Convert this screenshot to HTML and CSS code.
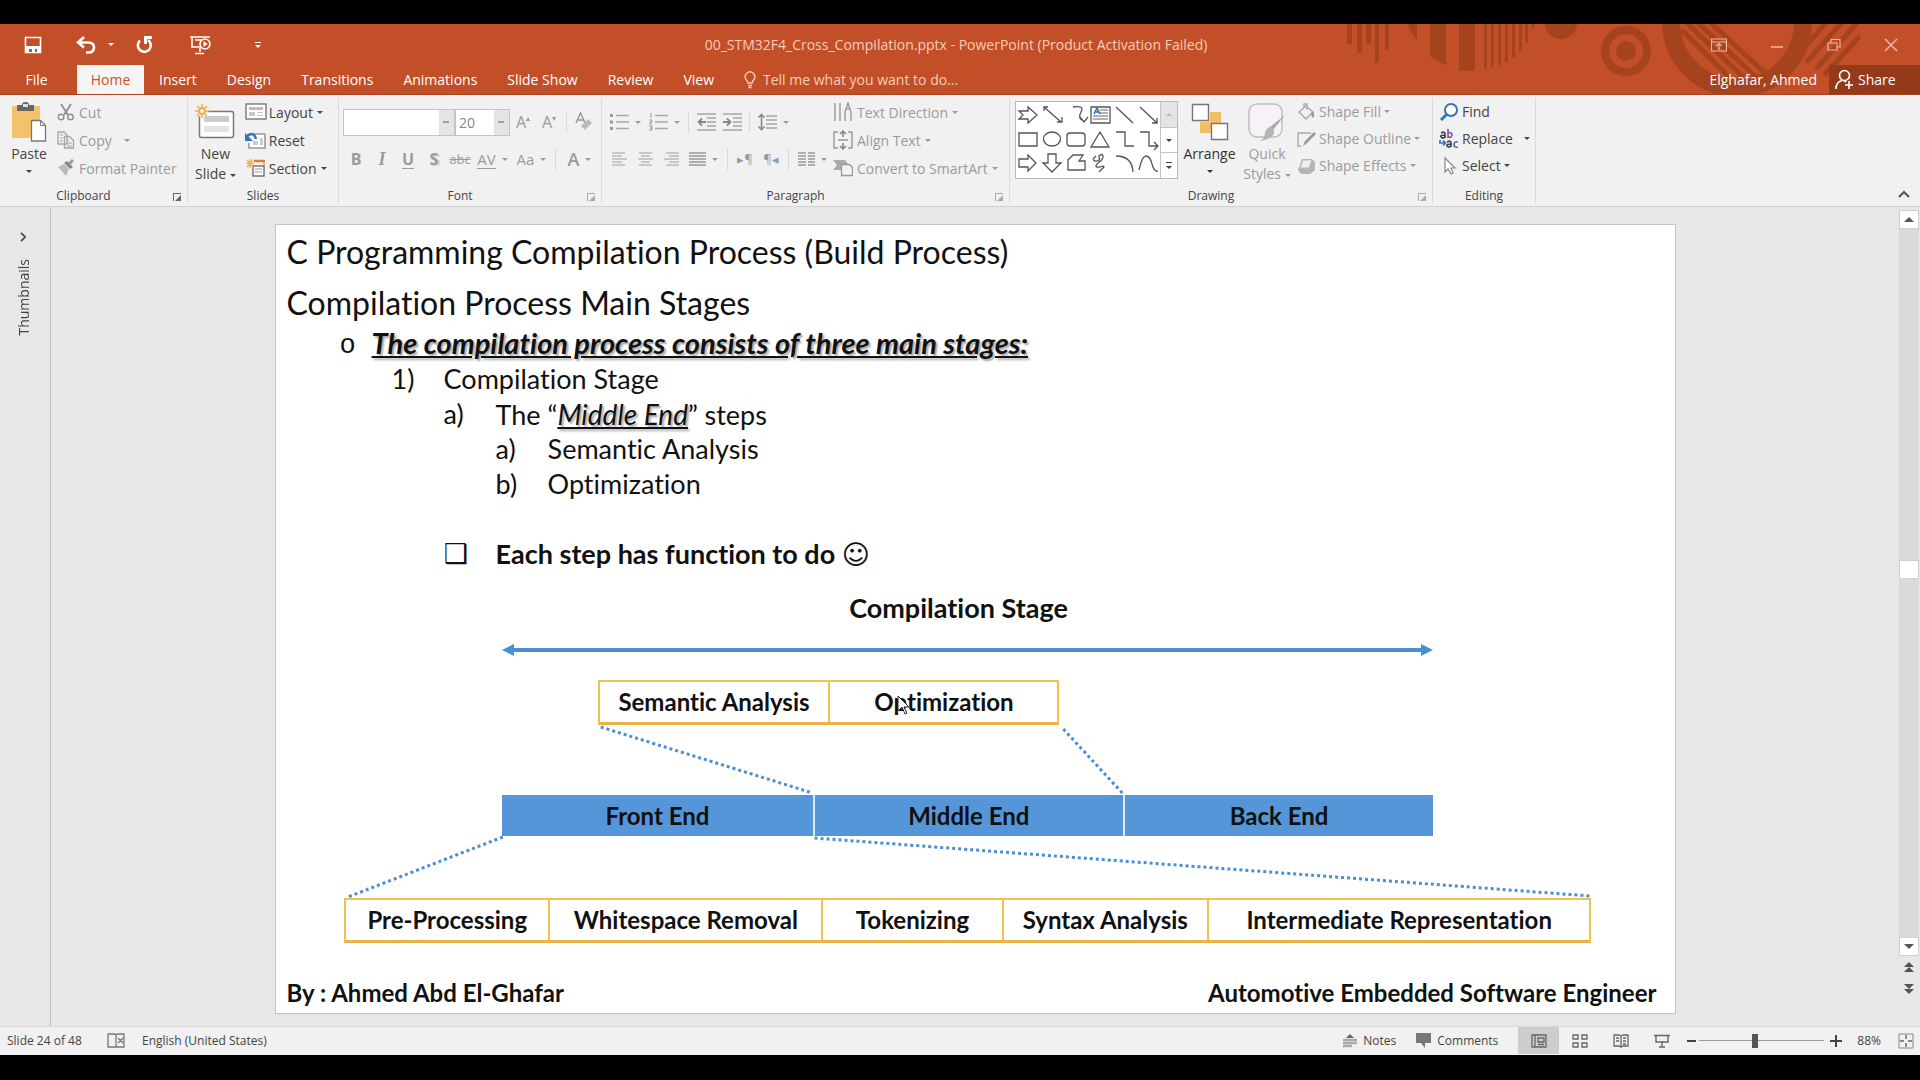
FILE: index.html
```html
<!DOCTYPE html>
<html lang="en">
<head>
<meta charset="utf-8">
<title>00_STM32F4_Cross_Compilation.pptx - PowerPoint</title>
<link rel="stylesheet" href="styles.css">
</head>
<body>
<div class="app">
  <header class="top">
    <svg class="top-art" width="520" height="71" viewBox="1340 24 520 71" aria-hidden="true">
      <g fill="#a5431f">
        <path d="M1347 24h5v20h-5zM1357 24h5v29h-5zM1366 24h5v20h-5zM1375 24h4v39h-4zM1385 24h4v26h-4z"/>
        <path d="M1408 24h9v16q-6-6-9-16zM1430 24h16v41q-9-3-16-9zM1459 24h16v47h-16zM1484 24h3v45h-3zM1491 24h3v43h-3zM1498 24h3v41h-3zM1505 24h3v38h-3zM1512 24h3v34h-3zM1519 24h3v27h-3zM1525 24h3v19h-3zM1532 24h2v5h-2z"/>
        <circle cx="1561" cy="23" r="16"/>
        <circle cx="1626" cy="51" r="10"/>
      </g>
      <circle cx="1626" cy="51" r="21" fill="none" stroke="#a5431f" stroke-width="8"/>
      <circle cx="1737" cy="22" r="66" fill="none" stroke="#a5431f" stroke-width="18"/>
      <path d="M1682 30l54 54M1686 22l60 58M1697 22l60 56M1710 22l56 52M1850 -5l-45 52M1866 -5l-60 68M1882 -5l-66 74M1898 -5l-74 80" stroke="#a5431f" stroke-width="5" fill="none"/>
    </svg>
    <div class="title-row">
      <div class="quick">
        <button class="tb save" aria-label="Save"><svg width="18" height="18" viewBox="0 0 18 18"><path d="M1.500 1.500h15v15h-15z" fill="none" stroke="#fff" stroke-width="1.600"/><path d="M1 10h16v7H1z" fill="#fff"/><path d="M5 13h3v3H5zM11 13h2v3h-2z" fill="#c24f28"/></svg></button>
        <button class="tb undo" aria-label="Undo"><svg width="20" height="18" viewBox="0 0 20 18"><path d="M8 1L2 6.500l6 5M3 6.500h9q6 0 6 5t-6 5h-2" fill="none" stroke="#fff" stroke-width="2.600"/></svg><span class="caret"></span></button>
        <button class="tb redo" aria-label="Repeat"><svg width="18" height="18" viewBox="0 0 18 18"><path d="M5 4.500A6.500 6.500 0 1 0 13 4" fill="none" stroke="#fff" stroke-width="2.600"/><path d="M9 0h8v3h-5v5H9z" fill="#fff"/></svg></button>
        <button class="tb show" aria-label="Start From Beginning"><svg width="24" height="20" viewBox="0 0 24 20"><path d="M1 2h20M3 2v10h9M6 5h7M11 13v4M6 18.500h9" fill="none" stroke="#fff" stroke-width="1.600"/><circle cx="16" cy="9" r="5" fill="#c24f28" stroke="#fff" stroke-width="1.600"/><path d="M14.500 6l4 3-4 3z" fill="#fff"/></svg></button>
        <button class="tb more" aria-label="Customize Quick Access Toolbar"><span class="bar"></span><span class="caret"></span></button>
      </div>
      <div class="doc-title">00_STM32F4_Cross_Compilation.pptx - PowerPoint (Product Activation Failed)</div>
      <div class="win">
        <button aria-label="Ribbon Display Options"><svg width="16" height="14" viewBox="0 0 16 14"><path d="M.500 1h15v12H.500zM.500 4h15M8 12V6M5 8l3-2.500L11 8" fill="none" stroke="#f2b79f" stroke-width="1.200"/></svg></button>
        <button aria-label="Minimize"><svg width="14" height="14" viewBox="0 0 14 14"><path d="M1 9h12" stroke="#f2b79f" stroke-width="1.500"/></svg></button>
        <button aria-label="Restore Down"><svg width="14" height="14" viewBox="0 0 14 14"><path d="M1 5h9v7H1zM4 5V1.500h9V9h-3" fill="none" stroke="#f2b79f" stroke-width="1.200"/></svg></button>
        <button aria-label="Close"><svg width="14" height="14" viewBox="0 0 14 14"><path d="M1 1l12 12M13 1L1 13" stroke="#f2b79f" stroke-width="1.500"/></svg></button>
      </div>
    </div>
    <div class="tab-row">
      <nav class="tabs">
        <button class="tab file">File</button><button class="tab active">Home</button><button class="tab">Insert</button><button class="tab">Design</button><button class="tab">Transitions</button><button class="tab">Animations</button><button class="tab">Slide Show</button><button class="tab">Review</button><button class="tab">View</button>
      </nav>
      <label class="tell"><svg width="12" height="18" viewBox="0 0 12 18"><path d="M4 12Q3.500 10 2 8.500A4.800 4.800 0 1 1 10 8.500Q8.500 10 8 12zM4 14.500h4M4.500 16.500h3" fill="none" stroke="#f8cdbb" stroke-width="1.400"/></svg><input type="text" placeholder="Tell me what you want to do..." aria-label="Tell me what you want to do"></label>
      <div class="account">
        <span>Elghafar, Ahmed</span>
        <button class="share"><svg width="20" height="21" viewBox="0 0 20 21"><circle cx="9.500" cy="6.500" r="5" fill="none" stroke="#fff" stroke-width="1.600"/><path d="M1 20q0-7 6-8.500M9 11.500l2 1.500M14 12v8M10 16h8" fill="none" stroke="#fff" stroke-width="1.600"/></svg>Share</button>
      </div>
    </div>
  </header>

  <section class="ribbon" aria-label="Home ribbon">
    <div class="group g-clip">
      <div class="body">
        <button class="big paste"><svg width="36" height="40" viewBox="0 0 36 40"><path d="M1 4h28v32H1z" fill="#f4c16d"/><path d="M6 3h5q0-3 3.500-3T18 3h5v6H6z" fill="#666"/><path d="M12 2h5v3h-5z" fill="#ddd"/><path d="M20.500 18.500h9l5 5V39h-14z" fill="#fff" stroke="#777" stroke-width="1.300"/><path d="M29.500 18.500v5h5" fill="none" stroke="#777"/></svg><span>Paste</span><span class="caret"></span></button>
        <div class="rows off">
          <button class="row"><svg width="18" height="18" viewBox="0 0 18 18"><path d="M4 1l7 11M14 1L7 12" stroke="#8f8f8f" stroke-width="1.800"/><circle cx="4" cy="14" r="2.800" fill="none" stroke="#8f8f8f" stroke-width="1.400"/><circle cx="13.500" cy="14" r="2.800" fill="none" stroke="#8f8f8f" stroke-width="1.400"/></svg>Cut</button>
          <button class="row"><svg width="18" height="18" viewBox="0 0 18 18"><path d="M1 1h6l3 3v9H1zM7.500 5.500h5l4 4V17h-9z" fill="#f1f1f1" stroke="#a5a5a5" stroke-width="1.300"/><path d="M3 4h3M3 7h3M3 10h3M10 9h2M10 12h5M10 15h5" stroke="#a5a5a5"/></svg>Copy <span class="caret wide"></span></button>
          <button class="row"><svg width="18" height="18" viewBox="0 0 18 18"><path d="M1 8l6-3 5 5-3 7z" fill="#bbb"/><path d="M7 4l3-2 6 6-3 2z" fill="#888"/><path d="M12 5l4-4" stroke="#999" stroke-width="3"/></svg>Format Painter</button>
        </div>
      </div>
      <div class="label">Clipboard<button class="launch dark" aria-label="Clipboard settings"></button></div>
    </div>

    <div class="group g-slides">
      <div class="body">
        <button class="big"><svg width="40" height="36" viewBox="0 0 40 36"><rect x="4.500" y="7.500" width="34" height="26" rx="2" fill="#fff" stroke="#777" stroke-width="1.500"/><path d="M9 12h25v6H9z" fill="#ccc"/><path d="M9 22h25v6H9z" fill="#e4e4e4"/><circle cx="7" cy="7" r="6" fill="#f1f1f1"/><circle cx="7" cy="7" r="3" fill="none" stroke="#eeb04e" stroke-width="2"/><path d="M7 0v3M7 11v3M0 7h3M11 7h3M2 2l2 2M10 10l2 2M12 2l-2 2M2 12l2-2" stroke="#eeb04e" stroke-width="1.500"/></svg><span>New</span><span>Slide <i class="caret"></i></span></button>
        <div class="rows">
          <button class="row"><svg width="22" height="18" viewBox="0 0 22 18"><rect x="1" y="1" width="20" height="15" fill="#fff" stroke="#777" stroke-width="1.400"/><path d="M4 4h14v3H4z" fill="#bbb"/><path d="M4 9h6v4H4zM12 9h6v1h-6zM12 12h6v1h-6z" fill="#c8c8c8"/></svg>Layout <span class="caret"></span></button>
          <button class="row"><svg width="22" height="18" viewBox="0 0 22 18"><path d="M9 3h11v14H4v-5" fill="#fff" stroke="#999" stroke-width="1.600"/><path d="M8 10h5v4H8zM15 7h3v7h-3z" fill="#ccc"/><path d="M2 5q7-5 9 3" fill="none" stroke="#3a74b8" stroke-width="2.500"/><path d="M0 2v8h8z" fill="#3a74b8"/></svg>Reset</button>
          <button class="row"><svg width="22" height="18" viewBox="0 0 22 18"><path d="M9 2h11" stroke="#d9803c" stroke-width="2.500"/><path d="M8 7h11v10H8z" fill="#fff" stroke="#777" stroke-width="1.500"/><path d="M10 10h7M10 13h7" stroke="#bbb" stroke-width="1.500"/><path d="M19 2v5" stroke="#d9803c"/><path d="M5 0v9M1 4.500h8M2 1l6 7M8 1L2 8" stroke="#f0b45c" stroke-width="1.400"/></svg>Section <span class="caret"></span></button>
        </div>
      </div>
      <div class="label">Slides</div>
    </div>

    <div class="group g-font">
      <div class="body tools off">
        <div class="line">
          <select class="combo name" aria-label="Font" disabled><option></option></select><select class="combo size" aria-label="Font size" disabled><option>20</option></select>
          <button class="ib up" aria-label="Increase font size">A<sup>▴</sup></button><button class="ib up" aria-label="Decrease font size">A<sup>▾</sup></button><span class="sep"></span>
          <button class="ib" aria-label="Clear formatting"><svg width="18" height="20" viewBox="0 0 18 20"><path d="M1 11L5.500 1 10 11M3 8h5" fill="none" stroke="#999" stroke-width="1.500"/><path d="M6 14l7-7 4 4-7 7z" fill="#bbb"/></svg></button>
        </div>
        <div class="line">
          <button class="ib b">B</button><button class="ib i">I</button><button class="ib u">U</button><button class="ib s">S</button><button class="ib x">abc</button>
          <button class="ib dd av"><span>AV</span><i class="caret"></i></button><button class="ib dd"><span>Aa</span><i class="caret"></i></button><span class="sep"></span><button class="ib dd fc"><span>A</span><i class="caret"></i></button>
        </div>
      </div>
      <div class="label">Font<button class="launch" aria-label="Font settings"></button></div>
    </div>

    <div class="group g-para">
      <div class="body">
        <div class="tools off">
          <div class="line">
            <button class="ib dd" aria-label="Bullets"><svg width="19" height="18" viewBox="0 0 19 18"><path d="M6 2.500h13M6 9h13M6 15.500h13" stroke="#aaa" stroke-width="1.300"/><path d="M0 1h3v3H0zM0 7.500h3v3H0zM0 14h3v3H0z" fill="#999"/></svg><i class="caret"></i></button>
            <button class="ib dd" aria-label="Numbering"><svg width="19" height="18" viewBox="0 0 19 18"><path d="M6 2.500h13M6 9h13M6 15.500h13" stroke="#aaa" stroke-width="1.300"/><path d="M2 0v5M0 7h3v2H1v2h2M0 13h3v4H0M1 15h2" fill="none" stroke="#999"/></svg><i class="caret"></i></button><span class="sep"></span>
            <button class="ib" aria-label="Decrease indent"><svg width="19" height="18" viewBox="0 0 19 18"><path d="M0 1h19M10 5h9M10 9h9M10 13h9M0 17h19" stroke="#a5a5a5" stroke-width="1.500"/><path d="M9 9H2M5 5.500L1.500 9 5 12.500" fill="none" stroke="#888" stroke-width="1.800"/></svg></button>
            <button class="ib" aria-label="Increase indent"><svg width="19" height="18" viewBox="0 0 19 18"><path d="M0 1h19M10 5h9M10 9h9M10 13h9M0 17h19" stroke="#a5a5a5" stroke-width="1.500"/><path d="M0 9h7M4 5.500L7.500 9 4 12.500" fill="none" stroke="#888" stroke-width="1.800"/></svg></button><span class="sep"></span>
            <button class="ib dd" aria-label="Line spacing"><svg width="19" height="18" viewBox="0 0 19 18"><path d="M8 3h11M8 7h11M8 11h11M8 15h11" stroke="#a5a5a5" stroke-width="1.500"/><path d="M3.500 1v16M.500 4.500l3-3 3 3M.500 13.500l3 3 3-3" fill="none" stroke="#888" stroke-width="1.600"/></svg><i class="caret"></i></button>
          </div>
          <div class="line">
            <button class="ib" aria-label="Align left"><svg width="15" height="14" viewBox="0 0 15 14"><path d="M0 1h13M0 4h10M0 7h15M0 10h10M0 13h13" stroke="#bbb" stroke-width="1.600"/></svg></button>
            <button class="ib" aria-label="Center"><svg width="15" height="14" viewBox="0 0 15 14"><path d="M1 1h13M3 4h9M0 7h15M3 10h9M1 13h13" stroke="#bbb" stroke-width="1.600"/></svg></button>
            <button class="ib" aria-label="Align right"><svg width="15" height="14" viewBox="0 0 15 14"><path d="M2 1h13M5 4h10M0 7h15M5 10h10M2 13h13" stroke="#bbb" stroke-width="1.600"/></svg></button>
            <button class="ib dd" aria-label="Justify"><svg width="17" height="14" viewBox="0 0 17 14"><path d="M0 1h17M0 4h17M0 7h17M0 10h17M0 13h17" stroke="#999" stroke-width="1.400"/></svg><i class="caret"></i></button><span class="sep"></span>
            <button class="ib pil" aria-label="Left to right">▸¶</button><button class="ib pil" aria-label="Right to left">¶◂</button><span class="sep"></span>
            <button class="ib dd" aria-label="Columns"><svg width="17" height="14" viewBox="0 0 17 14"><path d="M0 1h8M0 4h8M0 7h8M0 10h8M0 13h8M10 1h7M10 4h7M10 7h7M10 10h7M10 13h7" stroke="#999" stroke-width="1.400"/></svg><i class="caret"></i></button>
          </div>
        </div>
        <div class="rows off">
          <button class="row"><svg width="20" height="20" viewBox="0 0 20 20"><path d="M2 1v18M7 1v18M12 10v9M18 10v9M12 10l3-9 3 9M13 7h4" fill="none" stroke="#999" stroke-width="1.400"/></svg>Text Direction <span class="caret"></span></button>
          <button class="row"><svg width="20" height="20" viewBox="0 0 20 20"><path d="M5 2H1v16h4M15 2h4v16h-4M5 10h10" fill="none" stroke="#999" stroke-width="1.400"/><path d="M10 1v6M7 4l3-3 3 3M10 13v6M7 16l3 3 3-3" fill="none" stroke="#888" stroke-width="1.600"/></svg>Align Text <span class="caret"></span></button>
          <button class="row"><svg width="20" height="18" viewBox="0 0 20 18"><path d="M0 1h12l3 4H8v6H0l4-5z" fill="#aaa"/><path d="M8.500 5.500h8l3 3v8h-11z" fill="#f1f1f1" stroke="#999" stroke-width="1.300"/></svg>Convert to SmartArt <span class="caret"></span></button>
        </div>
      </div>
      <div class="label">Paragraph<button class="launch" aria-label="Paragraph settings"></button></div>
    </div>

    <div class="group g-draw">
      <div class="body">
        <div class="gallery">
          <svg class="shapes" width="144" height="74" viewBox="0 0 144 74" role="img" aria-label="Shapes"><g fill="none" stroke="#555" stroke-width="1.300">
            <path d="M3 9h9V5l9 8-9 8v-4H3l4-4zM28 5l17 15M41 20h5v-5M28 9V5h4M57 5q12-2 8 5t3 9M64 15l4 5 4-5M75 5h19v16H75z"/>
            <path d="M84 8h8M84 11h8M77 14h15M77 17h15" stroke="#999"/><path d="M78 12l3-6 3 6M79 10h4" stroke="#2b6cb8" stroke-width="1.500"/>
            <path d="M100 5l17 16M124 5l17 16M141 16v5h-5M3 31h18v13H3z"/><ellipse cx="36" cy="37" rx="8.500" ry="7"/><rect x="51" y="31" width="18" height="13" rx="3"/>
            <path d="M84 30l9 15H75zM100 30h9v14h9M124 30h9v14h9M138 40l4 4-4 4M3 57h9v-4l8 8-8 8v-4H3zM32 52h8v9h5l-9 9-9-9h5zM52 68V58l5-5h10l-4 6h6v9zM80 54q-5 4-1 5 6 1 4-5 3-3 4 0t-6 8q-3 4 3 3 6-2 3 1t-4 4M100 54q16 0 17 16M123 68q3-14 7-14t6 8 6 7"/></g></svg>
          <div class="gal-nav"><button class="dim" aria-label="Scroll up"><i class="caret flip"></i></button><button aria-label="Scroll down"><i class="caret"></i></button><button aria-label="More shapes"><i class="bar"></i><i class="caret"></i></button></div>
        </div>
        <button class="big arrange"><svg width="38" height="38" viewBox="0 0 38 38"><path d="M19 9h11v11H19zM9 19h11v11H9z" fill="#f2bd66"/><path d="M1.500 1.500h16v16h-16zM20.500 20.500h16v16h-16z" fill="#fff" stroke="#777" stroke-width="1.400"/></svg><span>Arrange</span><span class="caret"></span></button>
        <button class="big off"><svg width="38" height="38" viewBox="0 0 38 38"><rect x="1" y="1" width="33" height="33" rx="8" fill="#f7f2f7" stroke="#c4bcc4" stroke-width="1.500"/><path d="M37 12L25 27l-3-3z" fill="#aaa"/><path d="M22 24q5 2 4 7-4 6-14 7 5-3 5-8 1-5 5-6z" fill="#b5b5b5"/></svg><span>Quick</span><span>Styles <i class="caret"></i></span></button>
        <div class="rows off">
          <button class="row"><svg width="19" height="18" viewBox="0 0 19 18"><path d="M2 9l7-6 7 6-7 7zM7 5V1h3v6" fill="none" stroke="#aaa" stroke-width="1.400"/><path d="M15 8q4 3 1 7-3-3-1-7z" fill="#999"/></svg>Shape Fill <span class="caret"></span></button>
          <button class="row"><svg width="19" height="18" viewBox="0 0 19 18"><path d="M14 3H1v13h3M8 14l9-11" fill="none" stroke="#aaa" stroke-width="1.400"/><path d="M6 16l2-5 9-9 2 2-9 9z" fill="#999"/></svg>Shape Outline <span class="caret"></span></button>
          <button class="row"><svg width="19" height="18" viewBox="0 0 19 18"><path d="M5 2h10l3 3v8l-5 4H4l-3-4z" fill="#b5b5b5"/><path d="M6 3h9l-3 8H3z" fill="#eee" stroke="#bbb"/></svg>Shape Effects <span class="caret"></span></button>
        </div>
      </div>
      <div class="label">Drawing<button class="launch" aria-label="Drawing settings"></button></div>
    </div>

    <div class="group g-edit">
      <div class="body">
        <div class="rows">
          <button class="row"><svg width="20" height="20" viewBox="0 0 20 20"><circle cx="12" cy="8" r="6" fill="#fff" stroke="#3873b8" stroke-width="2"/><path d="M8 12l-6 6" stroke="#3873b8" stroke-width="3"/></svg>Find</button>
          <button class="row"><svg width="20" height="24" viewBox="0 0 20 24" aria-hidden="true"><g fill="none" stroke-width="1.700"><path d="M2 6q4-2 4 1v4M6 8q-5 0-4 2 2 2 4 0" stroke="#444"/><path d="M9 2v9M9 7q1-2 3-1t0 4q-2 1-3-1" stroke="#9b4fc0"/><path d="M8 15q4-2 4 1v4M12 17q-5 0-4 2 2 2 4 0" stroke="#444"/><path d="M19 15q-4-1-4 2.500t4 2.500" stroke="#3873b8"/><path d="M1 13v3h5M4 13.500L6.500 16 4 18.500" stroke="#3873b8"/></g></svg>Replace <span class="caret wide"></span></button>
          <button class="row"><svg width="20" height="20" viewBox="0 0 20 20"><path d="M6 2v14l3-3 3 5 2-1-2-5h4z" fill="#fff" stroke="#888" stroke-width="1.200"/></svg>Select <span class="caret"></span></button>
        </div>
      </div>
      <div class="label">Editing</div>
    </div>
    <button class="collapse" aria-label="Collapse the Ribbon"><svg width="12" height="8" viewBox="0 0 12 8"><path d="M1 7l5-5 5 5" fill="none" stroke="#555" stroke-width="2"/></svg></button>
  </section>

  <main class="work">
    <aside class="thumbs"><button aria-label="Expand thumbnails"><svg width="7" height="10" viewBox="0 0 8 12"><path d="M1 1l5 5-5 5" fill="none" stroke="#444" stroke-width="2"/></svg></button><span>Thumbnails</span></aside>
    <div class="stage">
      <article class="slide">
        <h1>C Programming Compilation Process (Build Process)</h1>
        <h2>Compilation Process Main Stages</h2>
        <div class="outline">
          <p class="l1"><span class="mk">o</span><em class="lead">The compilation process consists of three main stages:</em></p>
          <p class="l2"><span class="mk">1)</span>Compilation Stage</p>
          <p class="l3"><span class="mk">a)</span><span>The “<em class="mid">Middle End</em>” steps</span></p>
          <p class="l4"><span class="mk">a)</span>Semantic Analysis</p>
          <p class="l4"><span class="mk">b)</span>Optimization</p>
          <p class="l3 note"><span class="mk sym">❑</span><span>Each step has function to do <span class="smile">☺</span></span></p>
        </div>
        <section class="diagram">
          <h3>Compilation Stage</h3>
          <div class="arrow"></div>
          <ul class="cells steps"><li>Semantic Analysis</li><li>Optimization<svg class="cursor" width="14" height="20" viewBox="0 0 14 20"><path d="M1 1v15l4-4 3 7 2-1-3-6h5z" fill="#fff" stroke="#222"/></svg></li></ul>
          <svg class="link" viewBox="0 0 1401 70" preserveAspectRatio="none"><path d="M325 2L537 68M788 4L847 68"/></svg>
          <ul class="ends"><li>Front End</li><li>Middle End</li><li>Back End</li></ul>
          <svg class="link low" viewBox="0 0 1401 62" preserveAspectRatio="none"><path d="M227 1L72 61M539 2L1315 60"/></svg>
          <ul class="cells front"><li>Pre-Processing</li><li>Whitespace Removal</li><li>Tokenizing</li><li>Syntax Analysis</li><li>Intermediate Representation</li></ul>
        </section>
        <footer><span>By : Ahmed Abd El-Ghafar</span><span>Automotive Embedded Software Engineer</span></footer>
      </article>
    </div>
    <div class="scroll">
      <button class="sb" aria-label="Scroll up"><i class="tri up"></i></button>
      <div class="track"><span class="thumb"></span></div>
      <button class="sb" aria-label="Scroll down"><i class="tri"></i></button>
      <button class="jump" aria-label="Previous slide"><i class="tri up"></i><i class="tri up"></i></button>
      <button class="jump" aria-label="Next slide"><i class="tri"></i><i class="tri"></i></button>
    </div>
  </main>

  <footer class="status">
    <span class="count">Slide 24 of 48</span>
    <button aria-label="Spelling"><svg width="18" height="15" viewBox="0 0 18 15"><path d="M9 2v12H1V1h7zM9 2l1-1h7v13H9M11 5l5 5M16 5l-5 5" fill="none" stroke="#777" stroke-width="1.300"/></svg></button>
    <span class="lang">English (United States)</span>
    <div class="right">
      <button class="st notes"><svg width="14" height="14" viewBox="0 0 14 14"><path d="M3 4l4-4 4 4z" fill="#666"/><path d="M0 6h14M0 9h14M0 12h9" stroke="#aaa" stroke-width="2.500"/></svg>Notes</button>
      <button class="st comments"><svg width="15" height="15" viewBox="0 0 15 15"><path d="M0 0h15v10H9v5l-4-5H0z" fill="#777"/></svg>Comments</button>
      <button class="view on" aria-label="Normal"><svg width="16" height="14" viewBox="0 0 16 14"><path d="M1 1h14v12H1zM4 1v12M7 4h6v4H7zM7 10.500h6" fill="none" stroke="#666" stroke-width="1.300"/></svg></button>
      <button class="view" aria-label="Slide Sorter"><svg width="16" height="14" viewBox="0 0 16 14"><path d="M1 1h5v4H1zM10 1h5v4h-5zM1 9h5v4H1zM10 9h5v4h-5z" fill="none" stroke="#666" stroke-width="1.300"/></svg></button>
      <button class="view" aria-label="Reading View"><svg width="16" height="14" viewBox="0 0 16 14"><path d="M8 2v12M8 2L6 1H1v11h5l2 1 2-1h5V1h-5zM3 4h3M3 7h3M10 4h3M10 7h3M10 10h3" fill="none" stroke="#666" stroke-width="1.300"/></svg></button>
      <button class="view" aria-label="Slide Show"><svg width="16" height="14" viewBox="0 0 16 14"><path d="M0 1.500h16M2 2v6h12V2M8 8v5M5 13h6" fill="none" stroke="#666" stroke-width="1.400"/></svg></button>
      <button class="zb out" aria-label="Zoom out"><svg width="12" height="12" viewBox="0 0 12 12"><path d="M1 6h9" stroke="#444" stroke-width="2"/></svg></button>
      <input type="range" min="10" max="166" value="79" aria-label="Zoom">
      <button class="zb" aria-label="Zoom in"><svg width="12" height="12" viewBox="0 0 12 12"><path d="M0 6h12M6 0v12" stroke="#444" stroke-width="2"/></svg></button>
      <span class="pct">88%</span>
      <button class="fit" aria-label="Fit slide to window"><svg width="16" height="16" viewBox="0 0 16 16"><path d="M1 1h14v14H1z" fill="none" stroke="#888"/><path d="M8 2v4M8 10v4M2 8h4M10 8h4" fill="none" stroke="#666" stroke-width="1.400"/></svg></button>
    </div>
  </footer>
</div>
</body>
</html>
```
FILE: styles.css
```css
* { box-sizing: border-box; }
body { margin: 0; background: #000; font-family: "Open Sans", "Noto Sans", sans-serif; font-size: 14px; color: #444; }
button { font: inherit; color: inherit; background: none; border: 0; padding: 0; white-space: nowrap; }
p, h1, h2, h3, ul { margin: 0; padding: 0; }
ul { list-style: none; }
svg { flex: none; }
.app { min-height: 100vh; padding: 24px 0 25px; display: flex; flex-direction: column; }

.caret { display: inline-block; width: 0; height: 0; border: 3px solid transparent; border-top-color: currentColor; border-bottom: 0; vertical-align: middle; flex: none; }
.caret.wide { margin-left: 8px; }
.caret.flip { border: 3px solid transparent; border-bottom-color: currentColor; border-top: 0; }
.bar { width: 6px; height: 1px; background: currentColor; }

/* Title bar and tabs */
.top { position: relative; background: #c24f28; color: #fff; border-bottom: 1px solid #a5431f; overflow: hidden; }
.top-art { position: absolute; right: 60px; top: 0; }
.title-row { position: relative; height: 41px; display: flex; align-items: center; justify-content: space-between; }
.quick { display: flex; align-items: center; flex: 1; padding-left: 24px; }
.tb { display: flex; align-items: center; gap: 12px; height: 24px; }
.save { width: 52px; }
.undo { width: 59px; }
.redo { width: 54px; }
.show { width: 66px; }
.more { flex-direction: column; justify-content: center; gap: 2px; }
.doc-title { color: #f8cdbb; white-space: nowrap; padding-right: 10px; }
.win { flex: 1; display: flex; justify-content: flex-end; gap: 43px; padding-right: 22px; }
.win button { display: flex; align-items: center; }
.tab-row { position: relative; height: 29px; display: flex; }
.tabs { display: flex; }
.tab { padding: 0 15px; }
.tab.file { width: 77px; padding: 0 18px 0 14px; }
.tab.active { background: #f5f5f5; color: #d0502a; width: 67px; padding: 0; }
.tell { display: flex; align-items: center; gap: 7px; padding-left: 15px; flex: 1; }
.tell input { width: 240px; background: none; border: 0; padding: 0; font: inherit; color: #fff; }
.tell input::placeholder { color: #f8cdbb; opacity: 1; }
.account { display: flex; align-items: center; gap: 12px; }
.share { background: #943a1b; height: 29px; width: 91px; display: flex; align-items: center; gap: 3px; padding-left: 6px; }

/* Ribbon */
.ribbon { background: #f1f1f1; border-bottom: 1px solid #d2d2d2; height: 112px; display: flex; }
.group { display: flex; flex-direction: column; border-right: 1px solid #dcdcdc; margin: 3px 0 2px; flex: none; }
.g-clip { width: 188px; }
.g-slides { width: 151px; padding-left: 7px; }
.g-font { width: 263px; }
.g-para { width: 408px; }
.g-draw { width: 423px; }
.g-edit { width: 103px; }
.body { flex: 1; display: flex; align-items: flex-start; }
.label { position: relative; height: 16px; line-height: 16px; font-size: 12px; text-align: center; padding-right: 20px; }
.g-slides .label { padding-right: 7px; }
.g-edit .label { padding: 0; }
.launch { position: absolute; right: 6px; top: 5px; width: 8px; height: 8px; border-left: 1px solid #aaa; border-top: 1px solid #aaa; }
.launch::after { content: ""; position: absolute; right: 0; bottom: 0; border: 3px solid transparent; border-right-color: #aaa; border-bottom-color: #aaa; }
.dark { border-color: #666; }
.dark::after { border-right-color: #666; border-bottom-color: #666; }
.off { color: #9b9b9b; }
.big { display: flex; flex-direction: column; align-items: center; line-height: 20px; padding-top: 4px; }
.big svg { height: 40px; margin-bottom: 2px; }
.big > .caret { margin-top: 6px; }
.paste { width: 44px; margin-left: 7px; }
.rows { display: flex; flex-direction: column; }
.row { height: 28px; display: flex; align-items: center; gap: 4px; }
.g-clip .rows { padding-left: 6px; }
.g-slides .row { gap: 2px; }
.g-slides .rows { padding-left: 9px; }
.g-slides .row .caret { margin-left: 2px; }
.tools { flex-direction: column; padding: 10px 0 0 4px; }
.line { display: flex; align-items: center; height: 28px; margin-bottom: 9px; }
.combo { appearance: none; height: 27px; border: 1px solid #c4c4c4; background: linear-gradient(#a0a0a0, #a0a0a0) right 5px center / 6px 2px no-repeat, linear-gradient(90deg, #fff calc(100% - 15px), #e4e4e4 calc(100% - 15px)); font: inherit; color: #888; padding: 0 3px; border-radius: 0; opacity: 1; }
.combo.name { width: 112px; }
.combo.size { width: 55px; }
.ib { width: 26px; height: 26px; display: flex; align-items: center; justify-content: center; font-size: 16px; }
.ib.dd { width: 39px; gap: 6px; font-size: 15px; }
.up sup { font-size: 8px; line-height: 8px; margin-bottom: 8px; }
.b, .u, .s { font-weight: 700; }
.i { font-family: "Liberation Serif", serif; font-style: italic; font-weight: 700; font-size: 18px; }
.u { text-decoration: underline; text-underline-offset: 3px; }
.s { text-shadow: 2px 1px 1px #ccc; }
.x { text-decoration: line-through; font-size: 13px; }
.av span { border-bottom: 1px solid #999; line-height: 18px; }
.ib.fc span { font-size: 18px; font-weight: 600; }
.pil { font-size: 13px; }
.sep { width: 1px; height: 22px; background: #dadada; margin: 0 4px; }
.g-para .tools { flex: 1; }
.g-para .rows { width: 176px; }
.gallery { display: flex; margin: 3px 0 0 5px; border: 1px solid #bbb; background: #fff; height: 78px; }
.gal-nav { width: 17px; display: flex; flex-direction: column; border-left: 1px solid #c4c4c4; }
.gal-nav button { flex: 1; display: flex; flex-direction: column; align-items: center; justify-content: center; gap: 3px; }
.gal-nav button + button { border-top: 1px solid #c4c4c4; }
.gal-nav .dim { background: #e4e4e4; color: #bbb; }
.arrange { width: 63px; color: #333; }
.g-draw .big.off { width: 52px; }
.g-draw .rows { padding-left: 4px; }
.g-draw .row, .g-edit .row { height: 27px; gap: 3px; }
.g-edit .rows { padding-left: 6px; }
.collapse { margin-left: auto; align-self: flex-end; padding: 0 10px 4px; }

/* Workspace */
.work { flex: 1; display: flex; background: #e7e7e7; }
.thumbs { width: 51px; border-right: 1px solid #bdbdbd; display: flex; flex-direction: column; align-items: center; padding: 20px 4px 0 0; gap: 14px; }
.thumbs span { writing-mode: vertical-rl; transform: rotate(180deg); font-size: 14px; }
.thumbs button { height: 18px; }
.stage { flex: 1; display: flex; justify-content: center; padding: 17px 0 12px 1px; }
.slide { width: 75.9%; background: #fff; border: 1px solid #c4c4c4; color: #111; font-family: Lato, sans-serif; font-variant-ligatures: none; display: flex; flex-direction: column; }
h1, h2 { font-weight: 400; font-size: 32px; padding-left: 11px; white-space: nowrap; }
h1 { line-height: 54px; }
h2 { line-height: 48px; }
.outline { font-size: 27px; line-height: 34px; }
.outline p { display: flex; white-space: nowrap; height: 35px; }
.outline em { text-decoration: underline; text-shadow: 2px 2px 2px #aaa; }
.mk { width: 52px; flex: none; }
.l1 { padding-left: 64px; }
.l1 .mk { width: 32px; line-height: 38px; font-family: "Liberation Mono", monospace; }
.l2 { padding-left: 116px; }
.l3 { padding-left: 168px; }
.l4 { padding-left: 220px; }
.lead { font-weight: 700; font-size: 29px; line-height: 32px; }
.mid { font-size: 28px; }
.outline .note { margin-top: 35px; font-weight: 700; }
.sym, .smile { font-family: "DejaVu Sans", sans-serif; font-weight: 400; }
.diagram { font-weight: 700; font-size: 24px; }
h3 { font-size: 27px; line-height: 36px; text-align: center; padding: 18px 34px 0 0; }
.arrow { height: 4px; margin: 22px 17.3% 0 16.2%; padding: 0 10px; background: #4a8fd6 content-box; position: relative; }
.arrow::before, .arrow::after { content: ""; position: absolute; top: -4px; border: 6px solid transparent; }
.arrow::before { left: 0; border-right: 12px solid #4a8fd6; border-left: 0; }
.arrow::after { right: 0; border-left: 12px solid #4a8fd6; border-right: 0; }
.cells { display: grid; border: 2px solid #f3c14e; border-bottom: 3px solid #ebb247; line-height: 40px; text-align: center; white-space: nowrap; }
.cells li + li { border-left: 2px solid #f3c14e; }
.steps { width: 33%; margin: 28px 0 0 23%; grid-template-columns: 1fr 1fr; }
.steps li { position: relative; }
.cursor { position: absolute; left: 67px; top: 13px; }
.link { display: block; width: 100%; height: 70px; overflow: visible; }
.low { height: 62px; }
.link path { fill: none; stroke: #4a8fd6; stroke-width: 3; stroke-dasharray: 3 3; vector-effect: non-scaling-stroke; }
.ends { display: grid; grid-template-columns: repeat(3, 1fr); margin: 0 17.3% 0 16.2%; line-height: 41px; text-align: center; background: #5596d8; }
.ends li + li { border-left: 2px solid #dce9f7; }
.front { margin: 0 6% 0 4.9%; grid-template-columns: 203fr 274fr 181fr 206fr 384fr; }
.slide footer { margin-top: auto; display: flex; justify-content: space-between; padding: 0 19px 0 11px; font-weight: 700; font-size: 24px; line-height: 40px; }
.scroll { width: 21px; padding: 3px 1px 26px 0; display: flex; flex-direction: column; }
.sb { height: 19px; background: #fff; border: 1px solid #cfcfcf; display: flex; align-items: center; justify-content: center; }
.tri { width: 0; height: 0; border: 5px solid transparent; border-top-color: #555; border-bottom: 0; }
.tri.up { border: 5px solid transparent; border-bottom-color: #555; border-top: 0; }
.track { flex: 1; background: #dadada; display: grid; grid-template-rows: 331fr 19px 359fr; }
.thumb { grid-row: 2; background: #fff; border: 1px solid #cfcfcf; }
.jump { display: flex; flex-direction: column; align-items: center; padding-top: 6px; height: 22px; }

/* Status bar */
.status { background: #f1f1f1; border-top: 1px solid #d9d9d9; height: 29px; display: flex; align-items: center; font-size: 12px; padding-bottom: 1px; }
.status button { display: flex; align-items: center; justify-content: center; }
.count { width: 107px; padding-left: 7px; white-space: nowrap; }
.lang { padding-left: 17px; white-space: nowrap; }
.right { margin-left: auto; display: flex; align-items: center; align-self: stretch; }
.st { gap: 6px; }
.notes { margin-right: 20px; }
.comments { margin-right: 20px; }
.view { width: 41px; align-self: stretch; }
.on { background: #cdcdcd; }
.zb { width: 18px; margin-left: 3px; }
.zb.out { width: 14px; }
input[type="range"] { appearance: none; width: 125px; height: 16px; margin: 0; background: linear-gradient(#999, #999) center / 100% 1px no-repeat; }
input[type="range"]::-webkit-slider-thumb { appearance: none; width: 6px; height: 14px; background: #555; }
.pct { padding: 0 17px 0 12px; }
.fit { margin-right: 6px; }
```
